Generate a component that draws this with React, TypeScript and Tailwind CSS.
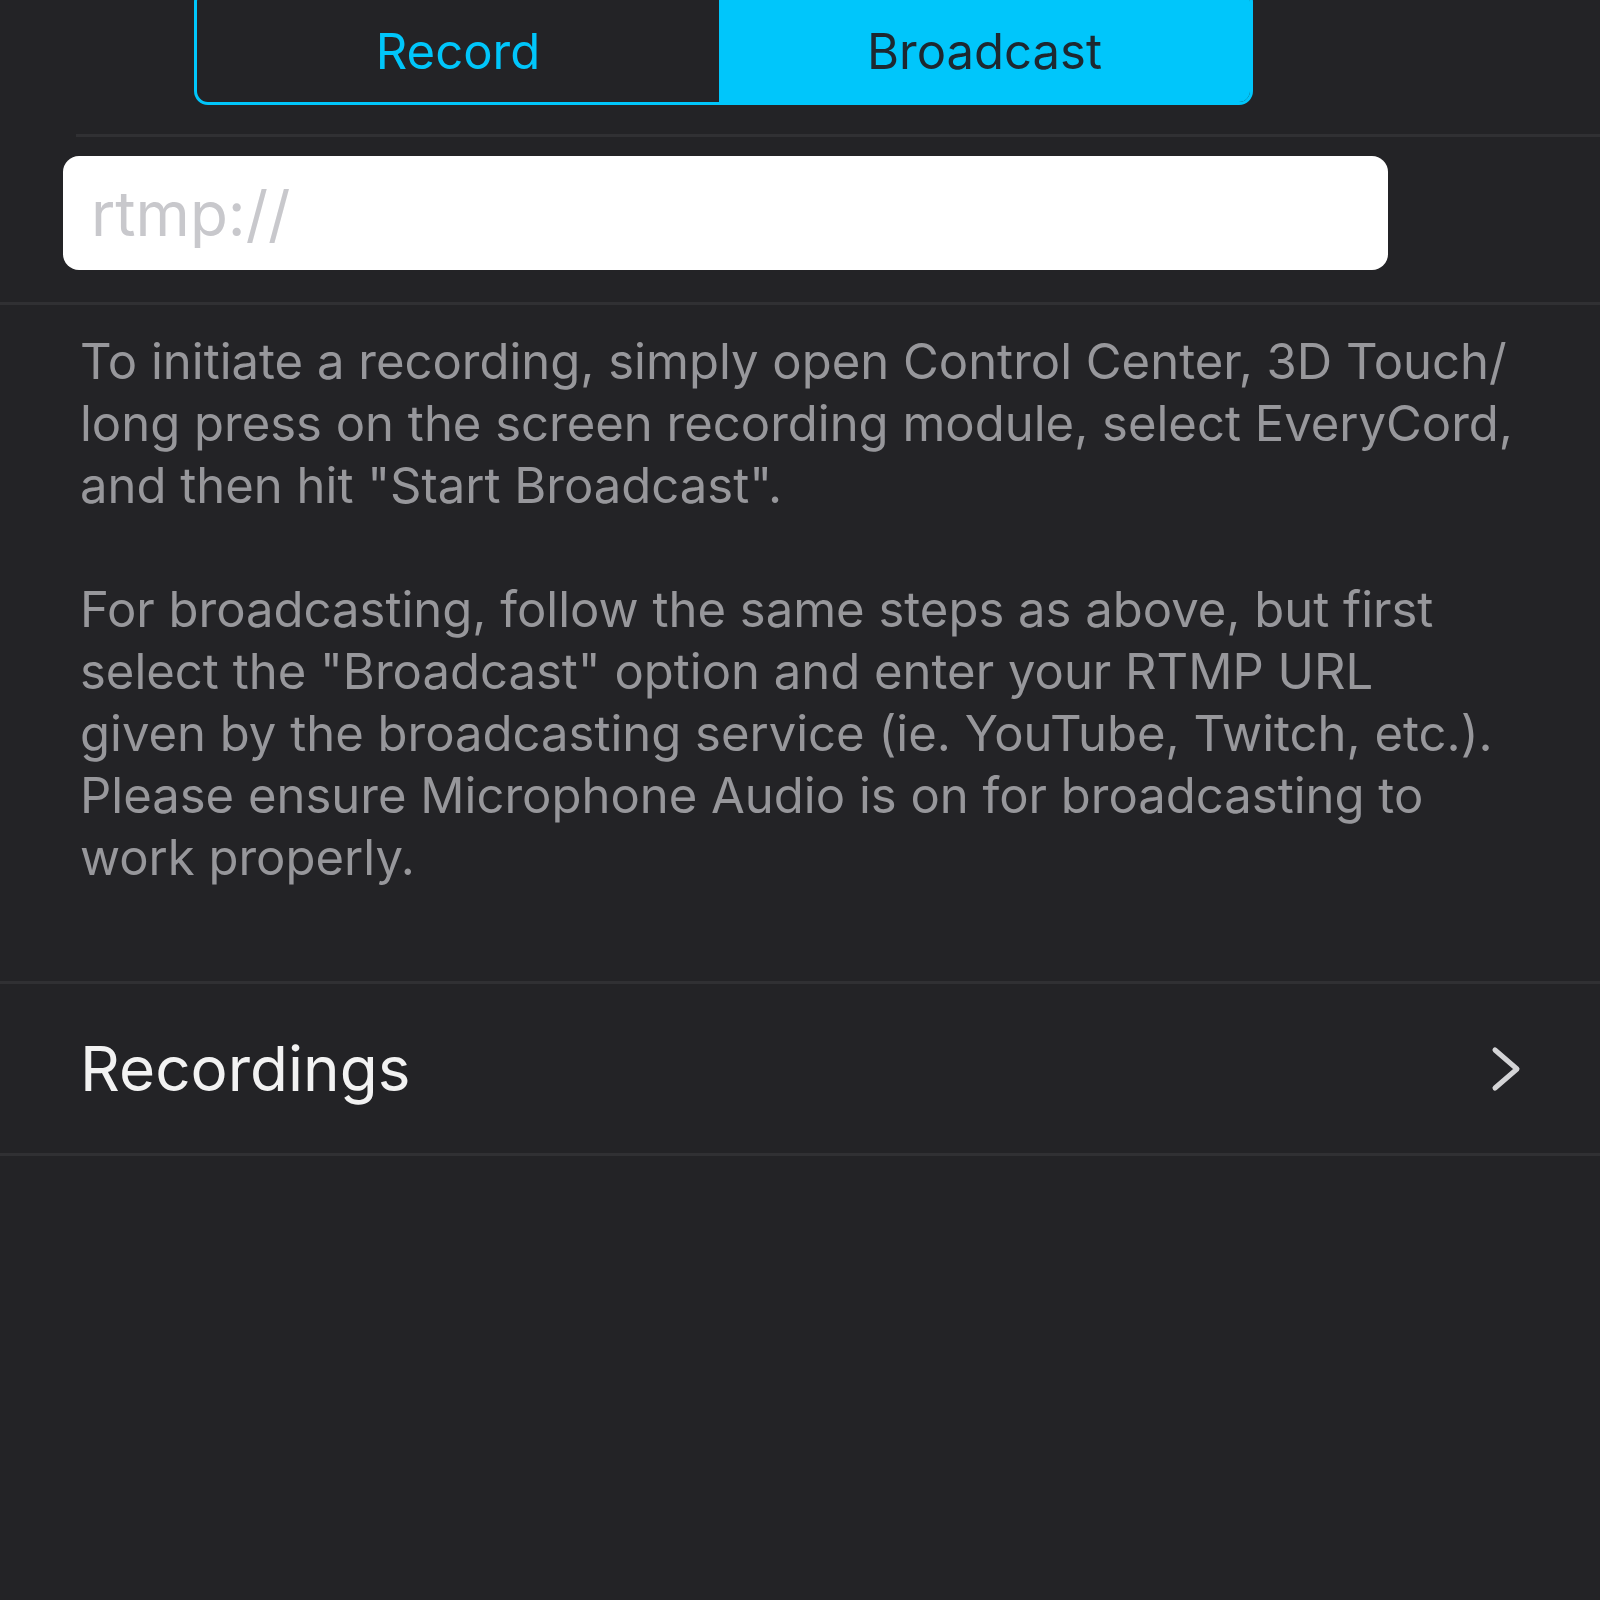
import React from "react";

export default function App() {
  const font = { fontFamily: "Inter, 'Noto Sans', sans-serif" };
  return (
    <div className="w-[1600px] h-[1600px] bg-[#232326] overflow-hidden" style={font}>
      {/* segmented control */}
      <div className="h-[134px] flex items-start">
        <div className="ml-[194px] mt-[-12px] w-[1059px] h-[117px] flex border-[3px] border-[#00c6fb] rounded-[14px] overflow-hidden">
          <div className="w-[522px] flex items-center justify-center pt-[10px] text-[#00c6fb] text-[49px]">Record</div>
          <div className="flex-1 flex items-center justify-center pt-[10px] bg-[#00c6fb] text-[#1d2830] text-[49px]">Broadcast</div>
        </div>
      </div>
      <div className="ml-[76px] h-[3px] bg-[#303033]" />
      {/* input */}
      <div className="h-[165px] pt-[19px]">
        <div className="ml-[63px] w-[1325px] h-[114px] bg-white rounded-[16px] flex items-center pl-[28px]">
          <span className="text-[62px] text-[#c8c8cc]">rtmp://</span>
        </div>
      </div>
      <div className="h-[3px] bg-[#303033]" />
      {/* description */}
      <div className="pl-[80px] pt-[26px] pb-[92px] text-[49px] leading-[62px] text-[#97979b] whitespace-nowrap">
        <p>
          To initiate a recording, simply open Control Center, 3D Touch/
          <br />
          long press on the screen recording module, select EveryCord,
          <br />
          and then hit "Start Broadcast".
        </p>
        <p className="mt-[62px]">
          For broadcasting, follow the same steps as above, but first
          <br />
          select the "Broadcast" option and enter your RTMP URL
          <br />
          given by the broadcasting service (ie. YouTube, Twitch, etc.).
          <br />
          Please ensure Microphone Audio is on for broadcasting to
          <br />
          work properly.
        </p>
      </div>
      <div className="h-[3px] bg-[#303033]" />
      {/* recordings row */}
      <div className="h-[169px] flex items-center justify-between pl-[80px] pr-[78px]">
        <span className="text-[62px] text-[#f2f2f2]">Recordings</span>
        <svg width="32" height="46" viewBox="0 0 32 46" fill="none">
          <path d="M5 4 L27 23 L5 42" stroke="#d4d4d6" strokeWidth="5" strokeLinecap="round" strokeLinejoin="round" />
        </svg>
      </div>
      <div className="h-[3px] bg-[#303033]" />
    </div>
  );
}
